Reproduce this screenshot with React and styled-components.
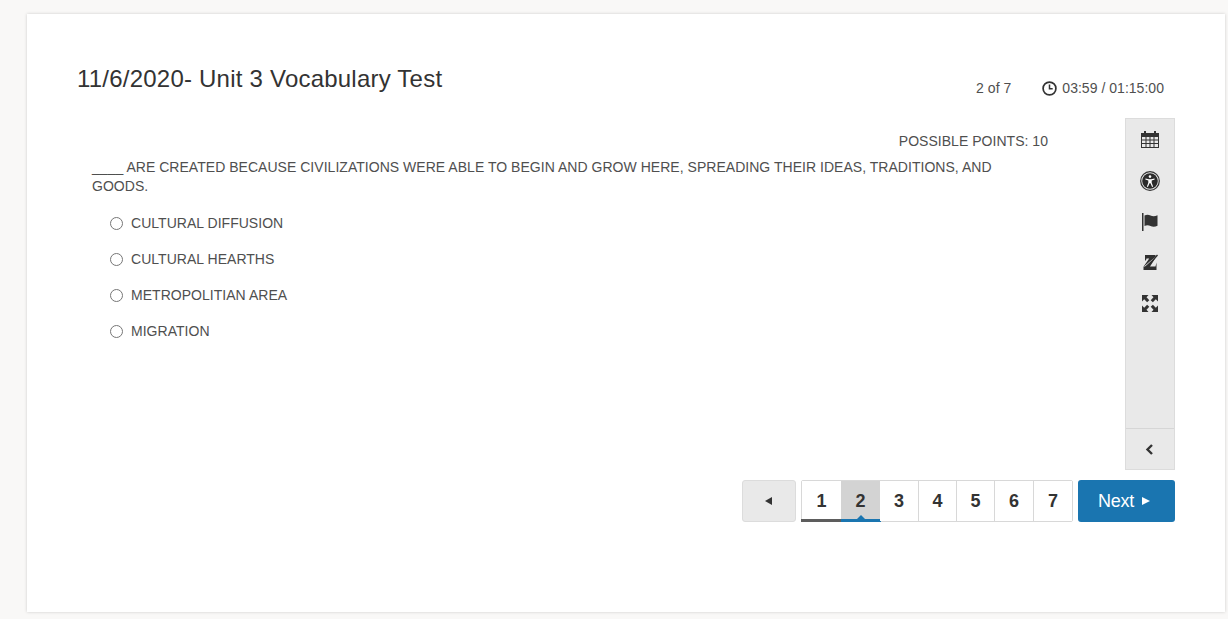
import React from "react";
import styled, { createGlobalStyle } from "styled-components";

const GlobalStyle = createGlobalStyle`
  html, body {
    margin: 0;
    padding: 0;
    background-color: #f9f8f7;
  }
  body {
    font-family: "Liberation Sans", Arial, sans-serif;
    color: #4f4f4f;
    font-size: 14px;
    letter-spacing: 0.03px;
  }
`;

const OPTIONS = ["CULTURAL DIFFUSION", "CULTURAL HEARTHS", "METROPOLITIAN AREA", "MIGRATION"];
const PAGES = [1, 2, 3, 4, 5, 6, 7];

const CalendarIcon = () => (
  <svg width="18" height="17" viewBox="0 0 18 17" fill="#333">
    <path fillRule="evenodd" d="M0 2h3V0h2v2h8V0h2v2h3v15H0V2zm1 4v2.500h3.500V6H1zm4.500 0v2.500h3V6h-3zm4 0v2.500h3V6h-3zm4 0v2.500H17V6h-3.500zM1 9.500V12h3.500V9.500H1zm4.500 0V12h3V9.500h-3zm4 0V12h3V9.500h-3zm4 0V12H17V9.500h-3.500zM1 13v3h3.500v-3H1zm4.500 0v3h3v-3h-3zm4 0v3h3v-3h-3zm4 0v3H17v-3h-3.500z" />
  </svg>
);

const AccessIcon = () => (
  <svg width="20" height="20" viewBox="0 0 20 20">
    <circle cx="10" cy="10" r="9.300" fill="none" stroke="#333" strokeWidth="1.200" />
    <circle cx="10" cy="10" r="7.800" fill="#2b2b2b" />
    <circle cx="10" cy="5.600" r="1.300" fill="#fff" />
    <path d="M5.500 7.500l3.400.7h2.200l3.400-.7.200.9-3 1v2.300l1.400 3.800-1 .4-1.600-3.600h-1l-1.600 3.600-1-.4 1.400-3.800V9.400l-3-1z" fill="#fff" />
  </svg>
);

const FlagIcon = () => (
  <svg width="18" height="18" viewBox="0 0 18 18" fill="#333">
    <path d="M1 0h1.500v18H1z" />
    <path d="M3.500 2.500c2-1 4-1 6 0s4.500 1 7-.2v10.400c-2.500 1.200-5 1.200-7 .2s-4-1-6 0V2.500z" />
  </svg>
);

const NoTextIcon = () => (
  <svg width="16" height="17" viewBox="0 0 16 17" fill="#2f2f2f">
    <path d="M3 1h10.500v3L8 12.500h5.500l1-4V16H1.500v-3.200L7.200 4.500H4.500l-.6 2H3z" />
    <path d="M2.500 12.500L13.500 3" stroke="#e9e9e9" strokeWidth="0.900" fill="none" />
    <path d="M3 15L15.500 1" stroke="#2f2f2f" strokeWidth="1.400" fill="none" />
  </svg>
);

const ExpandIcon = () => (
  <svg width="18" height="17" viewBox="0 0 18 17" fill="#333">
    <path d="M1 0h6.500L5.500 2.200l2.800 3-2.200 2.100-2.900-3L1 6.500z" />
    <path d="M17 0h-6.500l2 2.200-2.800 3 2.200 2.100 2.900-3L17 6.500z" />
    <path d="M1 17h6.500l-2-2.200 2.800-3-2.200-2.100-2.900 3L1 10.500z" />
    <path d="M17 17h-6.500l2-2.200-2.800-3 2.200-2.100 2.900 3 2.200-2.200z" />
  </svg>
);

const ChevronIcon = () => (
  <svg width="9" height="11" viewBox="0 0 9 11" fill="none" stroke="#333">
    <path d="M7 1L2.500 5.500 7 10" strokeWidth="2.400" />
  </svg>
);

const ClockIcon = () => (
  <svg width="15" height="15" viewBox="0 0 15 15" fill="none" stroke="#333">
    <circle cx="7.500" cy="7.500" r="6.400" strokeWidth="1.700" />
    <path d="M7.500 3.500v4.300h3.200" strokeWidth="1.500" />
  </svg>
);

export default function App() {
  return (
    <>
      <GlobalStyle />
      <Page>
        <Card>
          <Header>
            <Title>11/6/2020- Unit 3 Vocabulary Test</Title>
            <Status>
              <span>2 of 7</span>
              <Timer>
                <ClockIcon />
                <span>03:59 / 01:15:00</span>
              </Timer>
            </Status>
          </Header>
          <Main>
            <Question>
              <Points>POSSIBLE POINTS: 10</Points>
              <Prompt>
                ____ ARE CREATED BECAUSE CIVILIZATIONS WERE ABLE TO BEGIN AND GROW HERE, SPREADING THEIR IDEAS, TRADITIONS, AND GOODS.
              </Prompt>
              <Options>
                {OPTIONS.map((o) => (
                  <Option key={o}>
                    <Radio type="radio" name="answer" />
                    <span>{o}</span>
                  </Option>
                ))}
              </Options>
            </Question>
            <Sidebar>
              <Tools>
                <Tool><CalendarIcon /></Tool>
                <Tool><AccessIcon /></Tool>
                <Tool><FlagIcon /></Tool>
                <Tool><NoTextIcon /></Tool>
                <Tool><ExpandIcon /></Tool>
              </Tools>
              <Collapse><ChevronIcon /></Collapse>
            </Sidebar>
          </Main>
          <Footer>
            <PrevButton><Arrow $dir="left" /></PrevButton>
            <Pages>
              {PAGES.map((p) => (
                <PageNumber key={p} $current={p === 2} $seen={p === 1}>{p}</PageNumber>
              ))}
            </Pages>
            <NextButton>Next<Arrow $dir="right" /></NextButton>
          </Footer>
        </Card>
      </Page>
    </>
  );
}

const Page = styled.div`
  height: 619px;
  box-sizing: border-box;
  padding: 14px 3px 7px 27px;
  overflow: hidden;
`;

const Card = styled.div`
  height: 598px;
  box-sizing: border-box;
  background-color: #fff;
  box-shadow: 0 0 3px rgba(0, 0, 0, 0.18);
  padding: 50px 50px 0;
  display: flex;
  flex-direction: column;
`;

const Header = styled.div`
  height: 54px;
  display: flex;
  justify-content: space-between;
`;

const Title = styled.h1`
  margin: 0;
  font-size: 24px;
  font-weight: 400;
  line-height: 30px;
  letter-spacing: 0.22px;
  color: #333;
`;

const Status = styled.div`
  display: flex;
  align-items: center;
  gap: 31px;
  height: 48px;
  padding-right: 11px;
`;

const Timer = styled.div`
  display: flex;
  align-items: center;
  gap: 5px;
`;

const Main = styled.div`
  display: flex;
  height: 352px;
`;

const Question = styled.div`
  flex: 1;
  padding: 14px 77px 0 15px;
`;

const Points = styled.div`
  text-align: right;
  line-height: 19px;
  margin-bottom: 7px;
`;

const Prompt = styled.div`
  line-height: 19px;
  width: 910px;
`;

const Options = styled.div`
  display: flex;
  flex-direction: column;
  margin-top: 9px;
  padding-left: 18px;
`;

const Option = styled.label`
  display: flex;
  align-items: center;
  height: 36px;
  gap: 8px;
`;

const Radio = styled.input`
  margin: 0;
  width: 13px;
  height: 13px;
`;

const Sidebar = styled.div`
  width: 50px;
  box-sizing: border-box;
  background-color: #e9e9e9;
  border: 1px solid #dcdcdc;
  display: flex;
  flex-direction: column;
  justify-content: space-between;
`;

const Tools = styled.div`
  display: flex;
  flex-direction: column;
  padding-right: 1px;
`;

const Tool = styled.div`
  height: 41px;
  display: flex;
  align-items: center;
  justify-content: center;
`;

const Collapse = styled.div`
  height: 40px;
  padding-right: 2px;
  border-top: 1px solid #d6d6d6;
  display: flex;
  align-items: center;
  justify-content: center;
`;

const Footer = styled.div`
  display: flex;
  justify-content: flex-end;
  gap: 5px;
  margin-top: 10px;
  height: 42px;
`;

const PrevButton = styled.button`
  width: 54px;
  padding: 0 2px 0 0;
  background-color: #e9e9e9;
  border: 1px solid #dcdcdc;
  border-radius: 3px;
  display: flex;
  align-items: center;
  justify-content: center;
`;

const Arrow = styled.span`
  display: inline-block;
  width: 0;
  height: 0;
  border-top: 4px solid transparent;
  border-bottom: 4px solid transparent;
  ${(p) => p.$dir === "left"
    ? "border-right: 7px solid #333;"
    : "border-left: 8px solid #fff; margin-left: 8px;"}
`;

const Pages = styled.div`
  display: grid;
  grid-template-columns: 39px 39px 39px 38px 38px 39px 38px;
  width: 272px;
  box-sizing: border-box;
  border: 1px solid #d8d8d8;
  border-radius: 2px;
`;

const PageNumber = styled.div`
  position: relative;
  display: flex;
  align-items: center;
  justify-content: center;
  font-size: 18px;
  font-weight: 700;
  color: #333;
  border-right: 1px solid #d8d8d8;
  background-color: ${(p) => (p.$current ? "#d3d3d3" : "#fff")};
  &:last-child {
    border-right: none;
  }
  ${(p) => p.$seen && `
    border-right: none;
    &::after {
      content: "";
      position: absolute;
      left: -1px;
      right: 0;
      bottom: -1px;
      height: 3px;
      background-color: #5d5d5d;
    }
  `}
  ${(p) => p.$current && `
    border-right: none;
    &::after {
      content: "";
      position: absolute;
      left: 0;
      right: -1px;
      bottom: -1px;
      height: 3px;
      background-color: #1a75b0;
    }
    &::before {
      content: "";
      position: absolute;
      left: 50%;
      margin-left: -4px;
      bottom: 2px;
      border-left: 4px solid transparent;
      border-right: 4px solid transparent;
      border-bottom: 4px solid #1a75b0;
    }
  `}
`;

const NextButton = styled.button`
  width: 97px;
  padding: 0 5px 0 0;
  background-color: #1a75b0;
  border: none;
  border-radius: 3px;
  color: #fff;
  font-family: inherit;
  font-size: 18px;
  letter-spacing: -0.2px;
  display: flex;
  align-items: center;
  justify-content: center;
`;
